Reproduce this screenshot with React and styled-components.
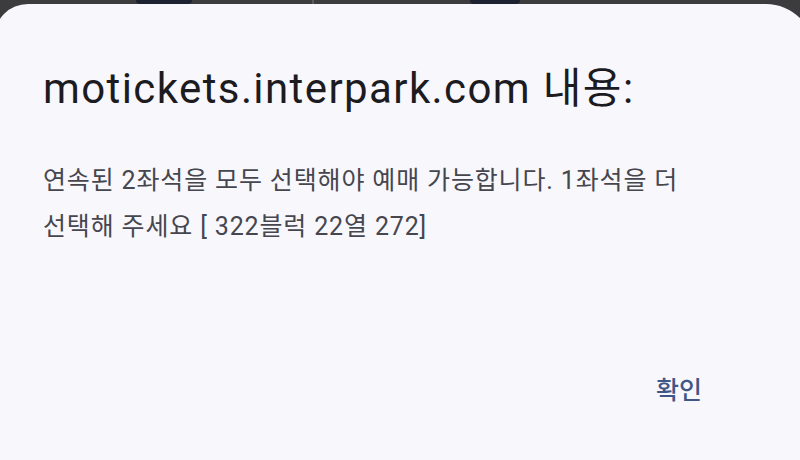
import React from 'react'
import styled, { createGlobalStyle } from 'styled-components'

const GlobalStyle = createGlobalStyle`
    html, body {
        margin: 0;
        padding: 0;
        background: #3c3c3e;
        overflow: hidden;
    }
    #root {
        height: 460px;
    }
`

function App() {
    return (
        <>
            <GlobalStyle />
            <Screen>
                <Backdrop>
                    <Blob width={56} offset={136} />
                    <Divider offset={120} />
                    <Blob width={50} offset={156} />
                </Backdrop>
                <Dialog>
                    <Title>motickets.interpark.com 내용:</Title>
                    <Message>
                        연속된 2좌석을 모두 선택해야 예매 가능합니다. 1좌석을 더
                        <br />
                        선택해 주세요 [ 322블럭 22열 272]
                    </Message>
                    <Actions>
                        <TextButton>확인</TextButton>
                    </Actions>
                </Dialog>
            </Screen>
        </>
    )
}

export default App

const Screen = styled.div`
    display: flex;
    flex-direction: column;
    height: 460px;
    overflow: hidden;
    background: #3c3c3e;
`

const Backdrop = styled.div`
    display: flex;
    height: 4px;
    flex-shrink: 0;
`

const Blob = styled.div`
    width: ${p => p.width}px;
    margin-left: ${p => p.offset}px;
    background: #1d2230;
    border-radius: 0 0 6px 6px;
`

const Divider = styled.div`
    width: 2px;
    margin-left: ${p => p.offset}px;
    background: #5a5a5c;
`

const Dialog = styled.div`
    flex: 1;
    display: flex;
    flex-direction: column;
    margin: 0 -14px 0 -6px;
    padding: 56px 0 0 49px;
    background: #f8f7fc;
    border-radius: 34px 48px 0 0;
    font-family: Roboto, "Noto Sans CJK KR", sans-serif;
`

const Title = styled.div`
    font-size: 42px;
    line-height: 58px;
    color: #1c1b1f;
    letter-spacing: 1.4px;
`

const Message = styled.div`
    margin-top: 40px;
    font-size: 25px;
    line-height: 46px;
    color: #46464f;
    letter-spacing: 0.85px;
`

const Actions = styled.div`
    display: flex;
    justify-content: flex-end;
    padding-right: 112px;
    margin-top: 126px;
`

const TextButton = styled.button`
    border: none;
    background: none;
    padding: 0;
    font-family: Roboto, "Noto Sans CJK KR", sans-serif;
    font-size: 25px;
    font-weight: 500;
    line-height: 30px;
    color: #3f5787;
`
